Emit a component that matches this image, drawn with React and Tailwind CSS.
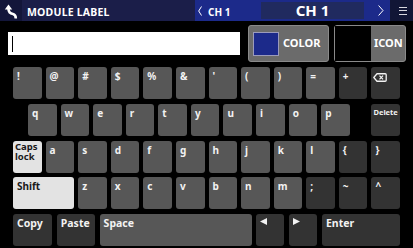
import React from "react";

const M = "bg-[#575757] text-[#f2f2f2]";
const D = "bg-[#333333] text-[#f2f2f2]";
const L = "bg-[#e3e3e3] text-[#1a1a1a]";

function Key({ k, extra = "" }) {
  const tone = k.t === "d" ? D : k.t === "l" ? L : M;
  return (
    <div
      className={`${tone} rounded-[3px] h-[32px] pl-[4px] pt-[3px] text-[10px] font-bold leading-[12px] overflow-hidden ${k.span2 ? "col-span-2" : ""} ${extra}`}
    >
      {k.icon ? k.icon : k.lbl}
    </div>
  );
}

const Backspace = (
  <svg width="14" height="9" viewBox="0 0 14 9" className="mt-[3px] -ml-[2px]">
    <path d="M4 0.75 H12.2 Q13.2 0.75 13.2 1.75 V7.25 Q13.2 8.25 12.2 8.25 H4 L0.8 4.5 Z" fill="none" stroke="#f2f2f2" strokeWidth="1.3" strokeLinejoin="round" />
    <path d="M6.5 2.6 L10 6.4 M10 2.6 L6.5 6.4" stroke="#f2f2f2" strokeWidth="1.3" />
  </svg>
);

const row1 = [
  { lbl: "!" }, { lbl: "@" }, { lbl: "#" }, { lbl: "$" }, { lbl: "%" }, { lbl: "&" },
  { lbl: "'" }, { lbl: "(" }, { lbl: ")" }, { lbl: "=" }, { lbl: "+", t: "d" }, { icon: Backspace, t: "d" },
];
const row3 = [
  {
    lbl: (
      <span className="block -mt-[2px] -ml-[2px] text-[9.5px] leading-[10.5px]">
        <span className="block">Caps</span>
        <span className="block">lock</span>
      </span>
    ),
    t: "l",
  },
  { lbl: "a" }, { lbl: "s" }, { lbl: "d" }, { lbl: "f" }, { lbl: "g" }, { lbl: "h" },
  { lbl: "j" }, { lbl: "k" }, { lbl: "l" }, { lbl: "{", t: "d" }, { lbl: "}", t: "d" },
];
const row4 = [
  { lbl: "Shift", t: "l", span2: true },
  { lbl: "z" }, { lbl: "x" }, { lbl: "c" }, { lbl: "v" }, { lbl: "b" }, { lbl: "n" },
  { lbl: "m" }, { lbl: ";", t: "d" }, { lbl: "~", t: "d" }, { lbl: "^", t: "d" },
];
const row2 = ["q", "w", "e", "r", "t", "y", "u", "i", "o", "p"];

export default function App() {
  return (
    <div
      className="w-[413px] h-[248px] bg-black overflow-hidden flex flex-col"
      style={{ fontFamily: '"Noto Sans", "Open Sans", sans-serif' }}
    >
      {/* Header */}
      <div className="h-[21px] flex shrink-0">
        <div className="w-[22px] bg-[#13163a] flex items-start justify-center pt-[3px]">
          <svg width="14" height="16" viewBox="0 0 14 16">
            <path d="M4.5 1.5 L0.8 6.5 H8.2 Z" fill="#ffffff" />
            <path d="M4.5 6 C4.5 9.5 6.5 10.5 9 11 C11 11.5 11.8 12.8 11.8 15.5" fill="none" stroke="#ffffff" strokeWidth="2.6" />
          </svg>
        </div>
        <div className="w-[173px] bg-[#1b1e49] flex items-center pl-[5px] pt-[4px] text-white text-[10.5px] font-bold tracking-[0.2px]">
          MODULE LABEL
        </div>
        <div className="w-[195px] bg-[#1c2a8a] flex items-center">
          <div className="w-[66px] flex items-center pl-[3px]">
            <svg width="4" height="10" viewBox="0 0 4 10">
              <path d="M3.5 0.5 L0.7 5 L3.5 9.5" fill="none" stroke="#ffffff" strokeWidth="1" />
            </svg>
            <span className="ml-[6px] text-white text-[10px] font-bold leading-none pt-[2px]">CH 1</span>
          </div>
          <div className="w-[103px] h-[17px] bg-[#202a5f] flex items-center justify-center text-white text-[15px] font-bold leading-none">
            CH 1
          </div>
          <div className="flex-1 flex items-center pl-[14px]">
            <svg width="6" height="11" viewBox="0 0 6 11">
              <path d="M0.6 0.5 L5 5.5 L0.6 10.5" fill="none" stroke="#ffffff" strokeWidth="1" />
            </svg>
          </div>
        </div>
        <div className="flex-1 bg-[#111636] flex flex-col items-center justify-center gap-[2.5px] pl-[2px]">
          <div className="w-[8px] h-[1px] bg-[#d8d8e0]" />
          <div className="w-[8px] h-[1px] bg-[#d8d8e0]" />
          <div className="w-[8px] h-[1px] bg-[#d8d8e0]" />
        </div>
      </div>

      {/* Input row */}
      <div className="mt-[4px] h-[37px] flex items-center shrink-0">
        <div className="ml-[8px] w-[232px] h-[23px] bg-white flex items-center pl-[4px]">
          <div className="w-[1px] h-[16px] bg-black" />
        </div>
        <div className="ml-[8px] w-[81px] h-full bg-[#6b6b6b] border border-[#8a8a8a] rounded-[3px] flex items-center pl-[4px]">
          <div className="w-[26px] h-[24px] bg-[#1c2a8a] border border-[#9b9bbb]" />
          <span className="ml-[4px] text-white text-[11px] font-bold">COLOR</span>
        </div>
        <div className="ml-[5px] w-[72px] h-full bg-[#6b6b6b] border border-[#8a8a8a] rounded-[3px] flex items-center">
          <div className="w-[36px] h-full bg-black" />
          <span className="ml-[3px] text-white text-[11px] font-bold">ICON</span>
        </div>
      </div>

      {/* Keyboard */}
      <div className="mt-[5px] ml-[13px] w-[387px] flex flex-col gap-[4.75px]">
        <div className="grid grid-cols-12 gap-x-[4px]">
          {row1.map((k, i) => (
            <Key key={i} k={k} />
          ))}
        </div>
        <div className="flex gap-x-[4px] pl-[15px]">
          {row2.map((c) => (
            <Key key={c} k={{ lbl: c }} extra="w-[28.58px] shrink-0" />
          ))}
          <div className={`${D} ml-auto w-[28.58px] shrink-0 rounded-[3px] h-[32px] pl-[2px] pt-[3px] text-[7.5px] font-bold leading-[10px]`}>
            Delete
          </div>
        </div>
        <div className="grid grid-cols-12 gap-x-[4px]">
          {row3.map((k, i) => (
            <Key key={i} k={k} />
          ))}
        </div>
        <div className="grid grid-cols-12 gap-x-[4px]">
          {row4.map((k, i) => (
            <Key key={i} k={k} />
          ))}
        </div>
        <div className="flex gap-[4.8px] text-[10.5px] font-bold leading-[12px]">
          <div className={`${D} w-[39px] h-[32px] rounded-[3px] pl-[4px] pt-[3px]`}>Copy</div>
          <div className={`${D} w-[38px] h-[32px] rounded-[3px] pl-[4px] pt-[3px]`}>Paste</div>
          <div className={`${M} w-[152px] h-[32px] rounded-[3px] pl-[4px] pt-[3px]`}>Space</div>
          <div className={`${D} w-[28px] h-[32px] rounded-[3px] pl-[4px] pt-[4px]`}>
            <svg width="7" height="7" viewBox="0 0 7 7">
              <path d="M0 3.5 L7 0 V7 Z" fill="#f2f2f2" />
            </svg>
          </div>
          <div className={`${D} w-[28px] h-[32px] rounded-[3px] pl-[4px] pt-[4px]`}>
            <svg width="7" height="7" viewBox="0 0 7 7">
              <path d="M7 3.5 L0 0 V7 Z" fill="#f2f2f2" />
            </svg>
          </div>
          <div className={`${D} flex-1 h-[32px] rounded-[3px] pl-[4px] pt-[3px]`}>Enter</div>
        </div>
      </div>
    </div>
  );
}
